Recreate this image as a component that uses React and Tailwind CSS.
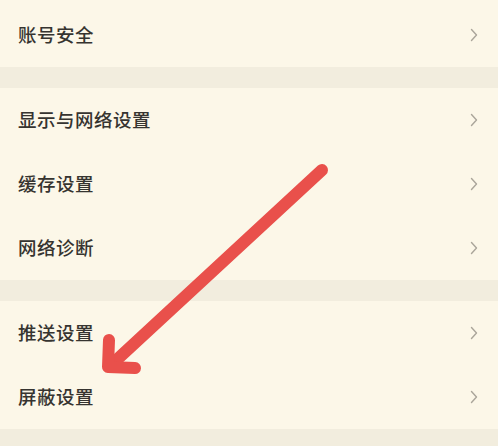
const groups = [
  ['账号安全'],
  ['显示与网络设置', '缓存设置', '网络诊断'],
  ['推送设置', '屏蔽设置'],
];

function Chevron() {
  return (
    <svg width="8" height="14" viewBox="0 0 8 14" fill="none">
      <path d="M1.5 1.5 L6.5 7 L1.5 12.5" stroke="#aaa59a" strokeWidth="1.4" strokeLinecap="round" strokeLinejoin="round" />
    </svg>
  );
}

function Row({ label, first }) {
  return (
    <div className={`flex items-center justify-between pl-[18px] pr-[20px] ${first ? 'h-[67px] pt-[3px]' : 'h-[64px]'}`}>
      <span className="text-[18.5px] text-[#363430] font-medium tracking-[0.5px]">{label}</span>
      <Chevron />
    </div>
  );
}

export default function App() {
  return (
    <div
      className="relative w-[498px] h-[446px] overflow-hidden bg-[#f2edde]"
      style={{ fontFamily: '"Noto Sans CJK SC", "Noto Sans", sans-serif' }}
    >
      <div className="flex flex-col gap-[21px]">
        {groups.map((g, gi) => (
          <div key={gi} className="bg-[#fcf7e8]">
            {g.map((label, i) => (
              <Row key={label} label={label} first={gi === 0 && i === 0} />
            ))}
          </div>
        ))}
      </div>

      <svg className="absolute left-0 top-0 pointer-events-none" width="498" height="446" viewBox="0 0 498 446">
        <g stroke="#e9504b" strokeWidth="12" strokeLinecap="round" strokeLinejoin="round" fill="none">
          <path d="M322 170 L110 366" />
          <path d="M109 340 L108 367 L135 368" />
        </g>
      </svg>
    </div>
  );
}
